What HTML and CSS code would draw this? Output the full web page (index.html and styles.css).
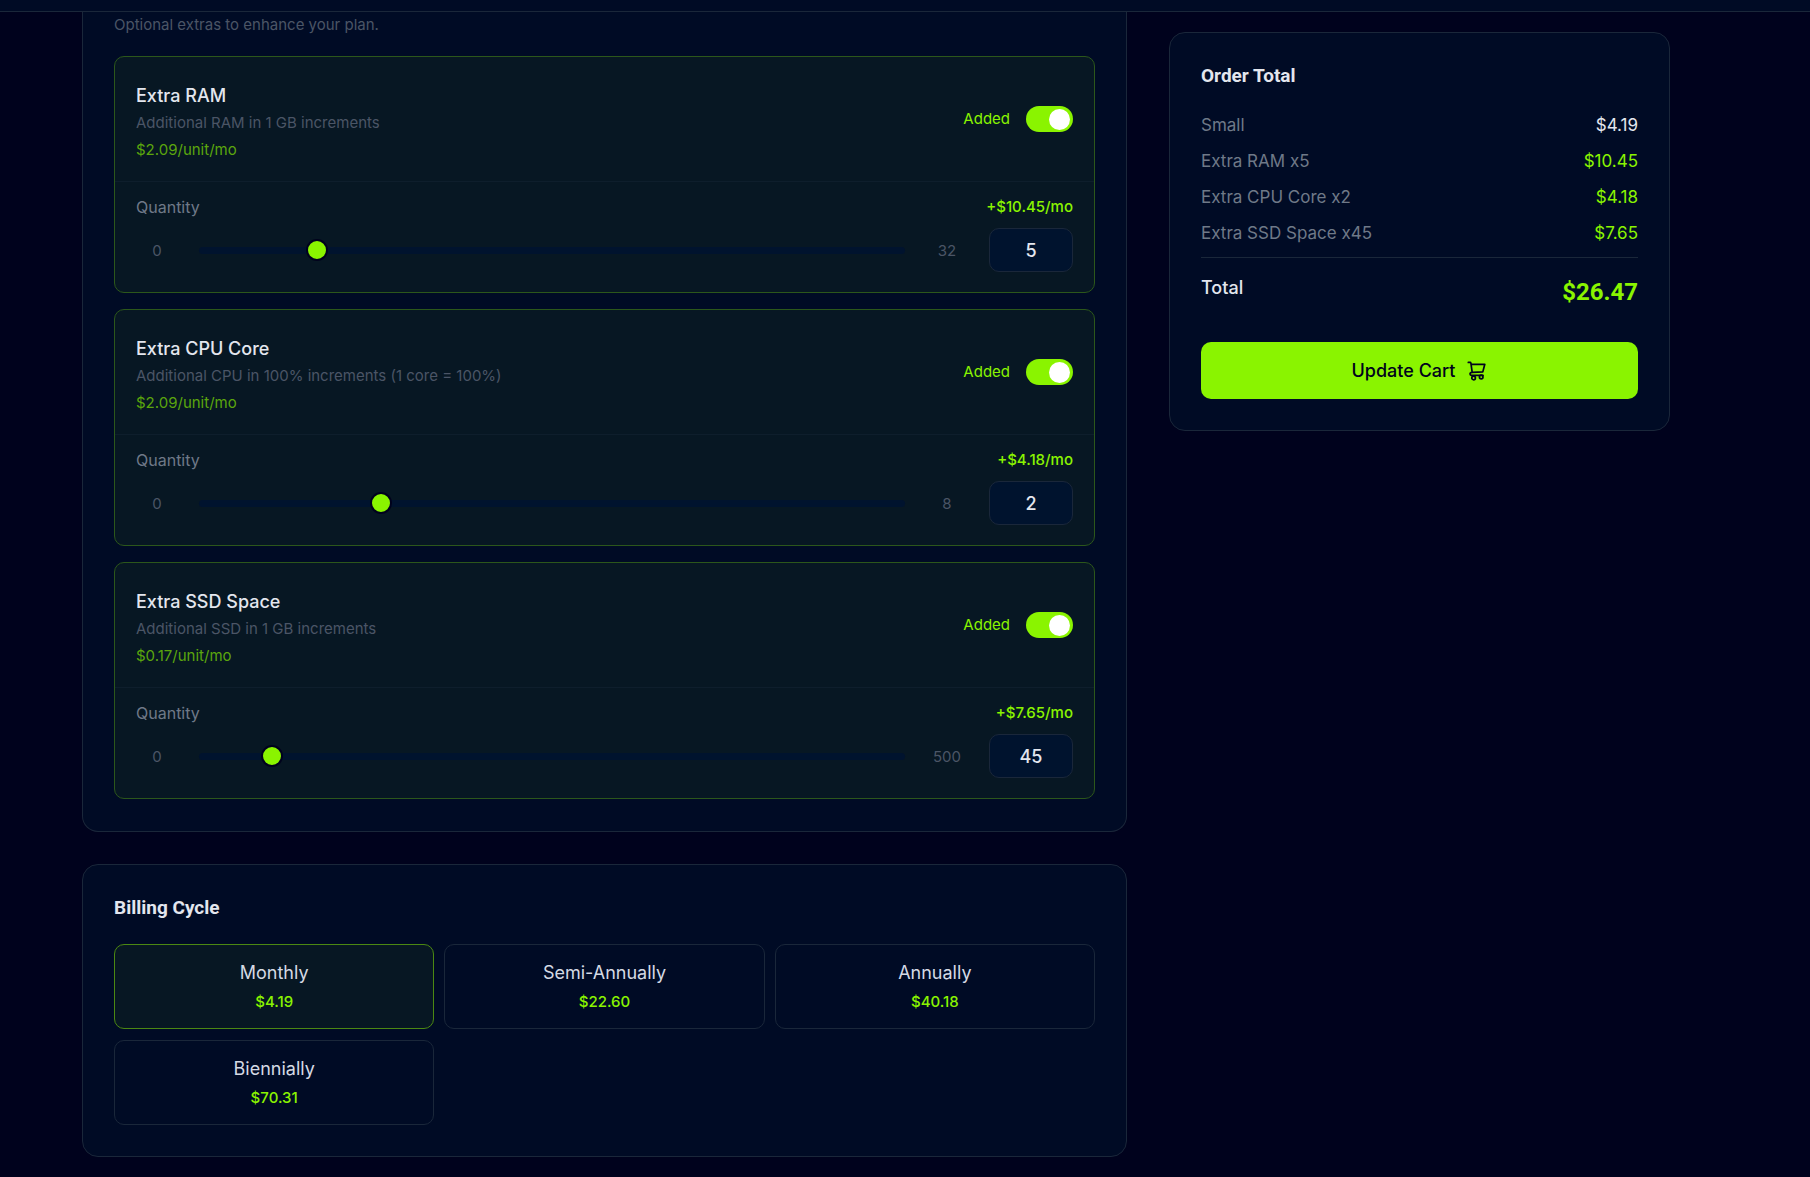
FILE: index.html
```html
<!DOCTYPE html>
<html lang="en">
<head>
<meta charset="utf-8">
<meta name="viewport" content="width=device-width, initial-scale=1">
<title>Configure plan</title>
<link rel="stylesheet" href="styles.css">
</head>
<body>
<header class="topbar"></header>
<main class="layout">
  <div class="column">
    <section class="panel panel-addons">
      <p class="panel-note">Optional extras to enhance your plan.</p>
      <div class="addons">
        <article class="addon">
          <div class="addon-head">
            <div class="addon-info">
              <h3 class="addon-title">Extra RAM</h3>
              <p class="addon-desc">Additional RAM in 1 GB increments</p>
              <p class="addon-price">$2.09/unit/mo</p>
            </div>
            <label class="switch-label">Added <input class="switch" type="checkbox" checked></label>
          </div>
          <div class="addon-body">
            <div class="quantity-line">
              <label class="quantity-label" for="ram-range">Quantity</label>
              <span class="quantity-cost">+$10.45/mo</span>
            </div>
            <div class="quantity-row">
              <span class="limit">0</span>
              <input class="slider" id="ram-range" type="range" min="0" max="32" value="5">
              <span class="limit">32</span>
              <input class="amount" type="number" min="0" max="32" value="5" aria-label="Extra RAM quantity">
            </div>
          </div>
        </article>
        <article class="addon">
          <div class="addon-head">
            <div class="addon-info">
              <h3 class="addon-title">Extra CPU Core</h3>
              <p class="addon-desc">Additional CPU in 100% increments (1 core = 100%)</p>
              <p class="addon-price">$2.09/unit/mo</p>
            </div>
            <label class="switch-label">Added <input class="switch" type="checkbox" checked></label>
          </div>
          <div class="addon-body">
            <div class="quantity-line">
              <label class="quantity-label" for="cpu-range">Quantity</label>
              <span class="quantity-cost">+$4.18/mo</span>
            </div>
            <div class="quantity-row">
              <span class="limit">0</span>
              <input class="slider" id="cpu-range" type="range" min="0" max="8" value="2">
              <span class="limit">8</span>
              <input class="amount" type="number" min="0" max="8" value="2" aria-label="Extra CPU Core quantity">
            </div>
          </div>
        </article>
        <article class="addon">
          <div class="addon-head">
            <div class="addon-info">
              <h3 class="addon-title">Extra SSD Space</h3>
              <p class="addon-desc">Additional SSD in 1 GB increments</p>
              <p class="addon-price">$0.17/unit/mo</p>
            </div>
            <label class="switch-label">Added <input class="switch" type="checkbox" checked></label>
          </div>
          <div class="addon-body">
            <div class="quantity-line">
              <label class="quantity-label" for="ssd-range">Quantity</label>
              <span class="quantity-cost">+$7.65/mo</span>
            </div>
            <div class="quantity-row">
              <span class="limit">0</span>
              <input class="slider" id="ssd-range" type="range" min="0" max="500" value="45">
              <span class="limit">500</span>
              <input class="amount" type="number" min="0" max="500" value="45" aria-label="Extra SSD Space quantity">
            </div>
          </div>
        </article>
      </div>
    </section>

    <section class="panel">
      <h2 class="panel-title">Billing Cycle</h2>
      <div class="cycles">
        <button class="cycle cycle-active" type="button" aria-pressed="true">Monthly<span class="cycle-price">$4.19</span></button>
        <button class="cycle" type="button" aria-pressed="false">Semi-Annually<span class="cycle-price">$22.60</span></button>
        <button class="cycle" type="button" aria-pressed="false">Annually<span class="cycle-price">$40.18</span></button>
        <button class="cycle" type="button" aria-pressed="false">Biennially<span class="cycle-price">$70.31</span></button>
      </div>
    </section>
  </div>

  <aside class="panel summary">
    <h2 class="panel-title">Order Total</h2>
    <dl class="lines">
      <div class="line"><dt>Small</dt><dd class="line-base">$4.19</dd></div>
      <div class="line"><dt>Extra RAM x5</dt><dd>$10.45</dd></div>
      <div class="line"><dt>Extra CPU Core x2</dt><dd>$4.18</dd></div>
      <div class="line"><dt>Extra SSD Space x45</dt><dd>$7.65</dd></div>
      <div class="line total"><dt>Total</dt><dd>$26.47</dd></div>
    </dl>
    <button class="submit" type="button">Update Cart
      <svg class="submit-icon" viewBox="0 0 20 20" fill="none" stroke="currentColor" stroke-width="1.7" stroke-linecap="round" stroke-linejoin="round" aria-hidden="true">
        <path d="M1.3 1.4h1.9c.4 0 .6.3.7.7l1.3 9.2M4 3.3h13.8l-2 7.6-10.6.5c-1.500.2-2.200.8-2.200 1.600 0 .8.6 1.300 1.500 1.300H16"/>
        <circle cx="6.600" cy="17" r="1.800"/>
        <circle cx="14.200" cy="16" r="1.800"/>
      </svg>
    </button>
  </aside>
</main>
</body>
</html>
```

FILE: styles.css
```css
:root {
  --page: #00021d;
  --surface: #000b25;
  --surface-raised: #00132e;
  --surface-active: #071723;
  --line: #1a273a;
  --lime: #8af400;
  --text: #e3e6ee;
  --text-muted: #6f7988;
  --text-faint: #4b5566;
}

* {
  box-sizing: border-box;
}

body {
  margin: 0;
  background: var(--page);
  color: var(--text);
  font-family: Inter, "Liberation Sans", sans-serif;
  font-size: 17px;
}

h2,
h3,
p,
dl,
dd {
  margin: 0;
}

button,
input {
  font-family: inherit;
}

.topbar {
  height: 12px;
  background: var(--surface);
  border-bottom: 1px solid var(--line);
}

.layout {
  display: grid;
  grid-template-columns: 1045fr 501fr;
  align-items: start;
  gap: 42px;
  padding: 0 140px 21px 82px;
}

.column {
  display: grid;
  gap: 32px;
}

.panel {
  padding: 31px;
  background: var(--surface);
  border: 1px solid var(--line);
  border-radius: 16px;
}

.panel-addons {
  padding-top: 0;
  padding-bottom: 32px;
  border-top: 0;
  border-radius: 0 0 16px 16px;
}

.panel-note {
  margin-bottom: 18px;
  color: var(--text-faint);
  font-size: 15px;
  line-height: 26px;
}

.panel-title {
  font-family: Roboto, sans-serif;
  font-size: 19px;
  font-weight: 700;
  line-height: 24px;
}

.addons {
  display: grid;
  gap: 16px;
}

.addon {
  background: var(--surface-active);
  border: 1px solid #2c571b;
  border-radius: 10px;
}

.addon-head {
  display: flex;
  align-items: center;
  justify-content: space-between;
  padding: 17px 21px 18px;
}

.addon-info {
  padding-top: 8px;
  font-size: 15px;
  line-height: 27px;
}

.addon-title {
  font-size: 18px;
  font-weight: 500;
}

.addon-desc {
  color: var(--text-faint);
}

.addon-price {
  color: #5ba60d;
}

.switch-label {
  display: flex;
  align-items: center;
  gap: 16px;
  color: var(--lime);
  font-size: 15px;
}

.switch {
  appearance: none;
  width: 47px;
  height: 26px;
  margin: 0;
  padding: 3px;
  background: #26313f;
  border-radius: 13px;
}

.switch::before {
  content: "";
  display: block;
  width: 21px;
  height: 21px;
  background: #fff;
  border-radius: 50%;
}

.switch:checked {
  background: var(--lime);
}

.switch:checked::before {
  margin-left: auto;
}

.addon-body {
  padding: 13px 21px 20px;
  border-top: 1px solid #0e1e2c;
}

.quantity-line {
  display: flex;
  justify-content: space-between;
  margin-bottom: 9px;
  color: var(--text-muted);
  font-size: 15px;
  line-height: 24px;
}

.quantity-label {
  font-size: 16px;
}

.quantity-cost {
  color: var(--lime);
  font-weight: 500;
}

.quantity-row {
  display: flex;
  align-items: center;
  gap: 21px;
}

.limit {
  width: 42px;
  color: var(--text-faint);
  font-size: 15px;
  text-align: center;
}

.slider {
  appearance: none;
  flex: 1;
  min-width: 0;
  height: 7px;
  margin: 0;
  background: var(--surface-raised);
  border-radius: 4px;
}

.slider::-webkit-slider-thumb {
  appearance: none;
  width: 22px;
  height: 22px;
  background: var(--lime);
  border: 2px solid var(--page);
  border-radius: 50%;
}

.amount {
  appearance: textfield;
  width: 84px;
  height: 44px;
  padding: 0;
  background: var(--surface-raised);
  border: 1px solid var(--line);
  border-radius: 10px;
  color: var(--text);
  font-size: 18px;
  font-weight: 500;
  text-align: center;
}

.amount::-webkit-inner-spin-button {
  appearance: none;
}

.cycles {
  display: grid;
  grid-template-columns: repeat(3, 1fr);
  gap: 11px 10px;
  margin-top: 24px;
}

.cycle {
  padding: 14px 14px 12px;
  background: transparent;
  border: 1px solid var(--line);
  border-radius: 10px;
  color: #d5dae4;
  font-size: 18px;
  line-height: 28px;
}

.cycle-active {
  background: var(--surface-active);
  border-color: #4b8812;
}

.cycle-price {
  display: block;
  color: var(--lime);
  font-size: 15px;
  font-weight: 500;
  line-height: 29px;
}

.summary {
  margin-top: 20px;
}

.lines {
  display: grid;
  gap: 10px;
  margin: 24px 0 33px;
}

.line {
  display: flex;
  justify-content: space-between;
  color: var(--text-muted);
  line-height: 26px;
}

.line dd {
  color: var(--lime);
}

.line .line-base {
  color: var(--text);
}

.total {
  margin-top: 1px;
  padding-top: 17px;
  border-top: 1px solid var(--line);
  color: var(--text);
  font-size: 18px;
  font-weight: 500;
}

.total dd {
  font-family: Roboto, sans-serif;
  font-size: 24px;
  font-weight: 700;
  line-height: 34px;
}

.submit {
  display: flex;
  align-items: center;
  justify-content: center;
  gap: 12px;
  width: 100%;
  height: 57px;
  background: var(--lime);
  border: 0;
  border-radius: 10px;
  color: #00021d;
  font-size: 18px;
  font-weight: 500;
}

.submit-icon {
  width: 20px;
  height: 20px;
}
```
